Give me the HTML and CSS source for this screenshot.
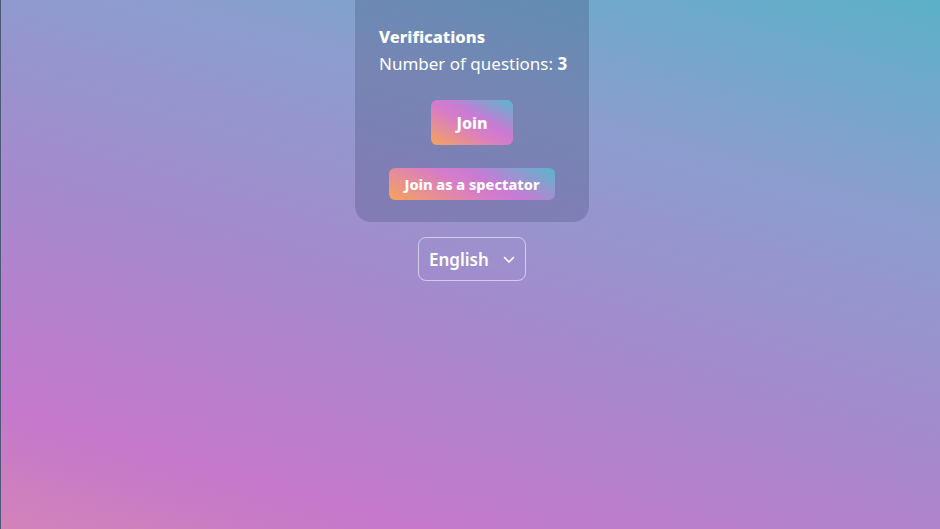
FILE: index.html
```html
<!DOCTYPE html>
<html lang="en">
<head>
    <meta charset="UTF-8">
    <meta name="viewport" content="width=device-width, initial-scale=1.0">
    <title>Quiz - Join</title>
    <link rel="stylesheet" href="styles.css">
</head>
<body>
    <div class="page">
        <div class="join-card">
            <h2 class="quiz-title">Verifications</h2>
            <p class="quiz-info">Number of questions: <strong>3</strong></p>

            <div class="join-actions">
                <button class="grad-button join-button">Join</button>
                <button class="grad-button spectator-button">Join as a spectator</button>
            </div>
        </div>

        <div class="lang-select">
            <span>English</span>
            <svg class="chevron" width="12" height="8" viewBox="0 0 12 8">
                <path d="M1.5 1.5 L6 6 L10.5 1.5" fill="none" stroke="#fff" stroke-width="1.6" stroke-linecap="round" stroke-linejoin="round"/>
            </svg>
        </div>
    </div>
</body>
</html>
```

FILE: styles.css
```css
* {
    margin: 0;
    padding: 0;
    box-sizing: border-box;
}

html, body {
    height: 100%;
    overflow: hidden;
}

body {
    font-family: "Noto Sans", sans-serif;
    color: #ffffff;
    background: linear-gradient(196deg, #5cb1c9 0%, #8c9dce 28%, #a38bcd 55%, #c478cb 85%, #d283b8 100%);
    border-left: 1px solid #4a5a78;
}

.page {
    display: flex;
    flex-direction: column;
    align-items: center;
    padding-left: 3px;
}

.join-card {
    width: 234px;
    margin-top: -40px;
    padding: 66px 20px 22px 24px;
    background-color: rgba(40, 50, 90, 0.22);
    border-radius: 16px;
}

.quiz-title {
    font-size: 16.5px;
    font-weight: 800;
    line-height: 22px;
}

.quiz-info {
    font-size: 17px;
    line-height: 22px;
    margin-top: 5px;
    white-space: nowrap;
}

.join-actions {
    display: flex;
    flex-direction: column;
    align-items: center;
    margin-top: 25px;
    margin-left: -4px;
}

.grad-button {
    border: none;
    color: #ffffff;
    font-family: inherit;
    font-weight: 800;
    background: linear-gradient(28deg, #f7a35a 0%, #d77cc8 45%, #c87bd3 60%, #56b8cc 100%);
    cursor: pointer;
}

.join-button {
    width: 82px;
    height: 45px;
    font-size: 16px;
    border-radius: 6px;
}

.spectator-button {
    width: 166px;
    height: 32px;
    margin-top: 23px;
    font-size: 14.5px;
    border-radius: 6px;
}

.lang-select {
    display: flex;
    align-items: center;
    gap: 14px;
    margin-top: 15px;
    height: 44px;
    width: 108px;
    padding: 0 10px;
    border: 1px solid rgba(255, 255, 255, 0.55);
    border-radius: 8px;
    font-size: 17px;
    font-weight: 600;
}

.chevron {
    margin-top: 1px;
}
```
